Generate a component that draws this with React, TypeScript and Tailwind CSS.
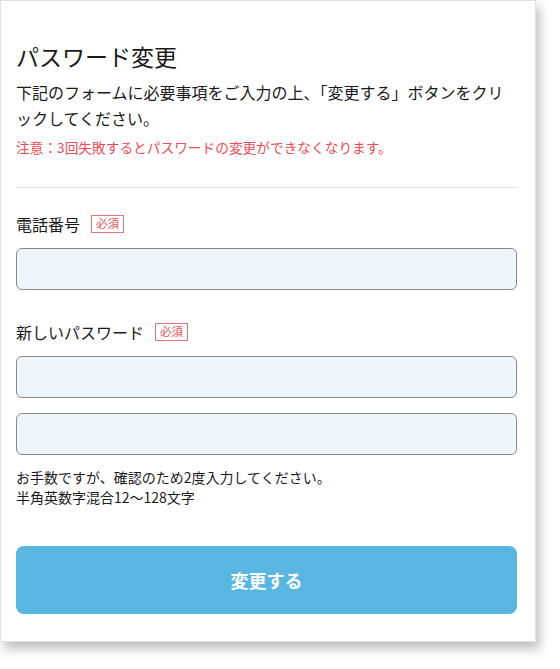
import React from "react";

const font = { fontFamily: '"Noto Sans CJK JP", "Noto Sans", sans-serif' };

function Badge() {
  return (
    <span className="ml-[11px] inline-flex h-[18px] w-[33px] items-center justify-center border-[1.5px] border-[#e8737a] text-[11.5px] leading-none text-[#e0545c]">
      必須
    </span>
  );
}

function Input() {
  return (
    <div className="h-[42px] w-full rounded-[6px] border border-[#8a8a8a] bg-[#eef6fb]" />
  );
}

export default function App() {
  return (
    <div className="min-h-[669px] w-[560px] bg-white" style={font}>
      <div className="flex h-[642px] w-[536px] flex-col border border-[#e2e2e2] bg-white pl-[15px] pr-[18px] pt-[39px] shadow-[4px_7px_10px_rgba(0,0,0,0.25)]">
        <h1 className="text-[23px] leading-[32px] font-normal text-[#1a1a1a]">パスワード変更</h1>
        <p className="mt-[7px] text-[16px] leading-[26px] text-[#1a1a1a]">
          下記のフォームに必要事項をご入力の上、「変更する」ボタンをクリ
          <br />
          ックしてください。
        </p>
        <p className="mt-[6px] text-[13.7px] leading-[20px] text-[#ec4b55]">
          注意：3回失敗するとパスワードの変更ができなくなります。
        </p>
        <div className="mt-[30px] h-px w-full bg-[#e3e3e3]" />
        <div className="mt-[25px] flex h-[22px] items-center text-[16px] text-[#1a1a1a]">
          電話番号
          <Badge />
        </div>
        <div className="mt-[13px]">
          <Input />
        </div>
        <div className="mt-[31px] flex h-[22px] items-center text-[16px] text-[#1a1a1a]">
          新しいパスワード
          <Badge />
        </div>
        <div className="mt-[13px]">
          <Input />
        </div>
        <div className="mt-[15px]">
          <Input />
        </div>
        <div className="mt-[12px] text-[14px] leading-[20px] text-[#1a1a1a]">
          <p>お手数ですが、確認のため2度入力してください。</p>
          <p>半角英数字混合12〜128文字</p>
        </div>
        <button className="mt-[39px] flex h-[68px] w-full items-center justify-center rounded-[8px] bg-[#59b6e1] text-[18px] font-bold text-white">
          変更する
        </button>
      </div>
    </div>
  );
}
